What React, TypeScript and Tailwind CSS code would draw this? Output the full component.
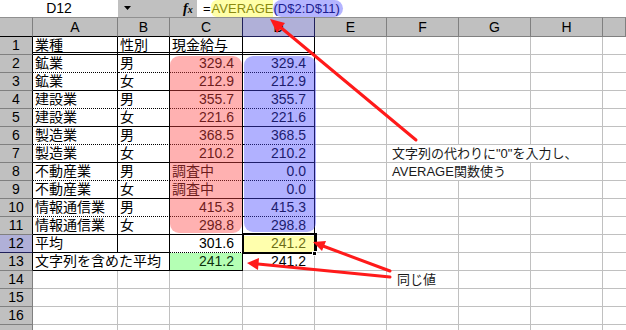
import clsx from "clsx";

type DataRow = { a: string; b: string; c: string; d: string };

const DATA: DataRow[] = [
  { a: "業種", b: "性別", c: "現金給与", d: "" },
  { a: "鉱業", b: "男", c: "329.4", d: "329.4" },
  { a: "鉱業", b: "女", c: "212.9", d: "212.9" },
  { a: "建設業", b: "男", c: "355.7", d: "355.7" },
  { a: "建設業", b: "女", c: "221.6", d: "221.6" },
  { a: "製造業", b: "男", c: "368.5", d: "368.5" },
  { a: "製造業", b: "女", c: "210.2", d: "210.2" },
  { a: "不動産業", b: "男", c: "調査中", d: "0.0" },
  { a: "不動産業", b: "女", c: "調査中", d: "0.0" },
  { a: "情報通信業", b: "男", c: "415.3", d: "415.3" },
  { a: "情報通信業", b: "女", c: "298.8", d: "298.8" },
  { a: "平均", b: "", c: "301.6", d: "241.2" },
  { a: "文字列を含めた平均", b: "", c: "241.2", d: "241.2" },
];

const COLS = ["A", "B", "C", "D", "E", "F", "G", "H", ""];

// bottom edge of a table cell: double under the header, dotted inside a pair, solid between pairs
function bottomEdge(r: number, c: number): string {
  if (r === 1) return "[border-bottom:3px_double_#000]";
  if (r <= 11) return r % 2 === 0 ? "[border-bottom:1px_dotted_#000]" : "[border-bottom:1px_solid_#000]";
  if (r === 12) return c <= 1 ? "[border-bottom:1px_solid_#000]" : "[border-bottom:1px_dotted_#000]";
  return c <= 2 ? "[border-bottom:1px_solid_#000]" : "[border-bottom:1px_solid_#c0c0c0]";
}

function rightEdge(r: number, c: number): string {
  if (c === 3 && r === 13) return "[border-right:1px_solid_#c0c0c0]";
  return "[border-right:1px_solid_#000]";
}

function isNumber(v: string) {
  return /^[0-9.]+$/.test(v);
}

function FormulaBar() {
  return (
    <div className="flex h-[17px] text-[14px] leading-[17px]">
      <div className="w-[118px] bg-white text-center">D12</div>
      <div className="flex w-[79px] items-center bg-[#c0c0c0]">
        <svg width="8" height="5" viewBox="0 0 8 5" className="ml-[6px]">
          <path d="M0 0h7L3.5 4z" fill="#000" />
        </svg>
        <span className="ml-[51px] font-['Liberation_Serif',serif] text-[14px] font-bold italic">
          f<span className="text-[10px]">x</span>
        </span>
      </div>
      <div className="flex flex-1 items-center bg-white pl-[6px] text-[13px]">
        <span>=</span>
        <span className="rounded-l-[6px] bg-[#ffffa8] pl-[1px] text-[#8a8a10]">AVERAGE</span>
        <span className="rounded-full bg-[#b4b4ff] pr-[3px] text-[#1c1c90]">(D$2:D$11)</span>
      </div>
    </div>
  );
}

const NOTE = "font-['Liberation_Sans','Noto_Sans_CJK_JP',sans-serif] text-[13px] text-[#1a1a1a]";

function Row({ r, children }: { r: number; children?: React.ReactNode }) {
  const inTable = r <= 13;
  const grid = "border-r border-b border-[#c0c0c0]";
  return (
    <>
      <div
        className={clsx(
          "border-r border-b text-center",
          r === 12 ? "border-b-[#20205a] bg-[#b0b0d8]" : "border-b-[#808080] bg-[#c0c0c0]",
          inTable ? "border-r-black" : "border-r-[#808080]"
        )}
      >
        {r < 17 ? r : null}
      </div>
      {children ?? (
        <>
          <div className={grid} />
          <div className={grid} />
          <div className={grid} />
          <div className={grid} />
        </>
      )}
      {/* E */}
      <div className={grid} />
      {/* F: long notes spill over into G and H, hiding their grid lines */}
      <div className={clsx("whitespace-nowrap border-b border-[#c0c0c0]", r === 7 || r === 8 ? "" : "border-r")}>
        {r === 7 && <span className={clsx(NOTE, "pl-[5px]")}>文字列の代わりに"0"を入力し、</span>}
        {r === 8 && <span className={clsx(NOTE, "pl-[5px]")}>AVERAGE関数使う</span>}
        {r === 14 && <span className={clsx(NOTE, "pl-[10px]")}>同じ値</span>}
      </div>
      {/* G */}
      <div className={clsx("border-b border-[#c0c0c0]", r === 7 ? "" : "border-r")} />
      {/* H */}
      <div className={grid} />
      {/* I */}
      <div className="border-b border-[#c0c0c0]" />
    </>
  );
}

function Sheet() {
  return (
    <div className="grid grid-cols-[33px_85px_52px_73px_72px_72px_72px_72px_72px_23px] grid-rows-[20px] auto-rows-[18px] text-[14px] leading-[17px]">
      {/* column headers */}
      <div className="border-t border-r border-b border-t-[#909090] border-r-[#808080] border-b-black bg-[#c0c0c0]" />
      {COLS.map((h, i) => (
        <div
          key={i}
          className={clsx(
            "border-t border-r border-b border-t-[#909090] text-center leading-[18px]",
            i === 3 ? "border-r-[#20205a] border-b-[#20205a] bg-[#b0b0d8]" : "bg-[#c0c0c0]",
            i === 2 ? "border-r-[#20205a]" : i !== 3 && "border-r-[#808080]",
            i < 3 && "border-b-black",
            i > 3 && "border-b-[#808080]"
          )}
        >
          {h}
        </div>
      ))}

      {DATA.map((row, idx) => {
        const r = idx + 1;
        return (
          <Row key={r} r={r}>
            {r === 13 ? (
              <div className={clsx("col-span-2 whitespace-nowrap pl-[2px]", rightEdge(r, 1), bottomEdge(r, 0))}>{row.a}</div>
            ) : (
              <>
                <div className={clsx("whitespace-nowrap pl-[2px]", rightEdge(r, 0), bottomEdge(r, 0))}>{row.a}</div>
                <div className={clsx("pl-[2px]", rightEdge(r, 1), bottomEdge(r, 1))}>{row.b}</div>
              </>
            )}
            <div
              className={clsx(
                rightEdge(r, 2),
                bottomEdge(r, 2),
                isNumber(row.c) ? "pr-[8px] text-right" : "pl-[2px]",
                r === 13 && "bg-[#b4ffb4] text-[#0c300c]"
              )}
            >
              {row.c}
            </div>
            <div className={clsx(rightEdge(r, 3), bottomEdge(r, 3), "pr-[8px] text-right")}>{row.d}</div>
          </Row>
        );
      })}

      {[14, 15, 16, 17].map((r) => (
        <Row key={r} r={r} />
      ))}
    </div>
  );
}

function Overlays() {
  return (
    <>
      <div className="pointer-events-none absolute left-[170px] top-[56px] h-[177px] w-[72px] rounded-[9px] bg-[rgba(255,70,70,0.42)]" />
      <div className="pointer-events-none absolute left-[244px] top-[56px] h-[176px] w-[72px] rounded-[9px] bg-[rgba(70,70,255,0.42)]" />
      <div className="pointer-events-none absolute left-[244px] top-[236px] h-[16px] w-[70px] bg-[rgba(255,255,60,0.42)]" />
      {/* active cell D12 */}
      <div className="pointer-events-none absolute left-[242px] top-[233px] h-[21px] w-[75px] border-2 border-black" />
      <div className="pointer-events-none absolute left-[312px] top-[251px] h-[5px] w-[5px] border border-white bg-black" />
      <svg className="pointer-events-none absolute left-0 top-0" width="626" height="330">
        <g stroke="#ff1a1a" strokeWidth="3" strokeLinecap="round" fill="none">
          <line x1="416" y1="140" x2="279" y2="26" />
          <line x1="390" y1="271" x2="323" y2="246" />
          <line x1="390" y1="277" x2="258" y2="264" />
        </g>
        <g fill="#ff1a1a">
          <polygon points="270,19 285,23 277,33" />
          <polygon points="313,242 326,241 322,251" />
          <polygon points="247,263 259,258 258,270" />
        </g>
      </svg>
    </>
  );
}

export default function App() {
  return (
    <div className="relative h-[330px] w-[626px] overflow-hidden bg-white font-['Liberation_Sans','Noto_Sans_CJK_JP',sans-serif] text-black">
      <FormulaBar />
      <Sheet />
      <Overlays />
    </div>
  );
}
